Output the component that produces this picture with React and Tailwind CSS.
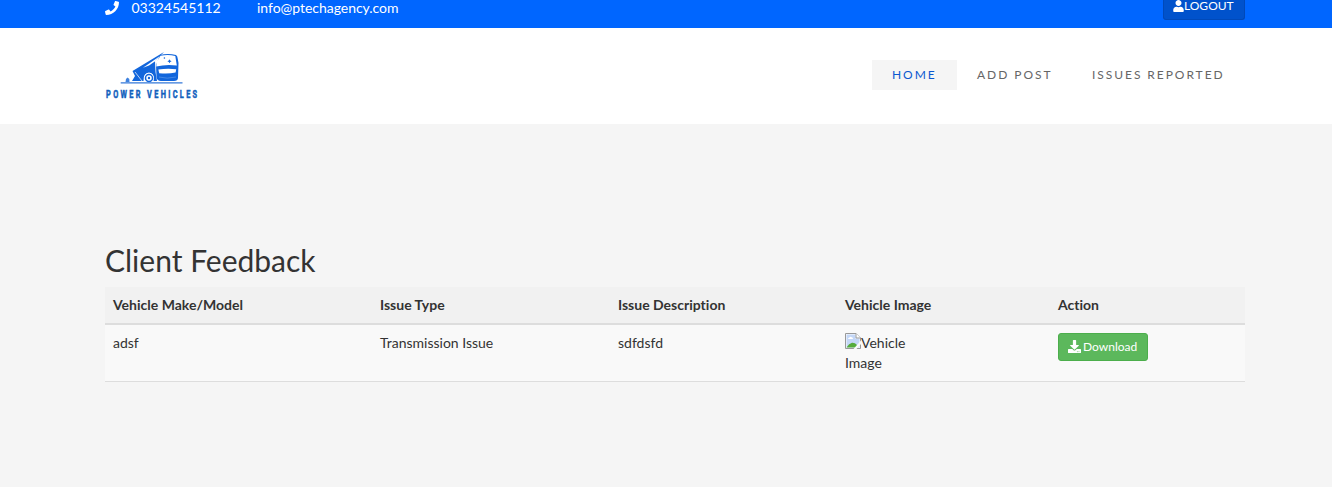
import React from "react";
import { FaPhone, FaUser, FaDownload } from "react-icons/fa";

function Logo() {
  return (
    <svg width="94" height="50" viewBox="0 0 94 50" role="img" aria-label="Power Vehicles">
      <path d="M27.5 21 L59 2 L50 11 L50.5 22 L52 31 H48.6 Q50 23 44 22.5 Q38 23 38.5 31 H27 L30 26Z" fill="#1266dc" />
      <path d="M38 17.8 L55 6 L50.5 11 L44 15.5Z" fill="#fff" />
      <path d="M30 22 L37 31" stroke="#fff" strokeWidth="0.7" fill="none" />
      <path d="M55 5 Q63 3 71 5 Q72.6 6 72.8 9 L73.5 13 L73 28 Q72.8 31 69 31 H56 Q52 31 51.5 27 L51 15Z" fill="#1266dc" />
      <path d="M55.5 5.8 Q63 4.3 70.3 6 L71.8 15.4 Q61 14 51.2 16.4 L51.8 11.5Z" fill="#fff" />
      <path d="M53.4 19.6 Q62 18 71.2 19.2 L70.6 22.6 Q63 24.2 54.2 23.2Z" fill="#fff" />
      <path d="M54 27 Q62 29.3 71 27" fill="none" stroke="#5a96e8" strokeWidth="0.7" />
      <path d="M64.5 9.2 l0.7 1.3 1.4 0.7 -1.4 0.7 -0.7 1.3 -0.7 -1.3 -1.4 -0.7 1.4 -0.7Z" fill="#1266dc" />
      <circle cx="59.4" cy="8" r="0.8" fill="#1266dc" />
      <circle cx="44" cy="28" r="4.8" fill="#fff" />
      <circle cx="44" cy="28" r="3.5" fill="none" stroke="#1266dc" strokeWidth="1.5" />
      <circle cx="44" cy="28" r="1.2" fill="#1266dc" />
      <path d="M20.5 32 L21 29 L22.5 27.5 L24.3 29 L24.5 32Z" fill="#3f82df" />
      <path d="M15.7 32.3 H77.5 V33.6 H15.7Z" fill="#3479d9" />
      <text
        x="1.6"
        y="47.6"
        fill="#1261bd"
        stroke="#1261bd"
        strokeWidth="0.5"
        textLength="130"
        lengthAdjust="spacing"
        className="font-['Roboto'] text-[10.5px] font-bold"
        transform="scale(0.7 1)"
      >
        POWER VEHICLES
      </text>
    </svg>
  );
}

function BrokenImage() {
  return (
    <svg className="inline-block h-4 w-4 align-top" viewBox="0 0 16 16" aria-hidden="true">
      <path d="M0.5 0.5 H11 L15.5 5 V15.5 H0.5Z" fill="#fff" stroke="#999" />
      <path d="M1.5 1.5 H10.5 V5.5 H14.5 V14.5 H1.5Z" fill="#c4d7f7" />
      <path d="M11 0.5 V5 H15.5" fill="#fff" stroke="#999" />
      <path d="M3 6 Q3 4.5 4.5 4.5 Q5.3 3 6.7 4.2 Q8 4.5 8 6Z" fill="#fff" />
      <path d="M1.5 14.5 Q4 10.5 7 9.7 Q10 9.5 12 12 L12 14.5Z" fill="#55ab3b" />
      <path d="M16 7.5 L8.5 16 H11.5 L16 11Z" fill="#f9f9f9" />
    </svg>
  );
}

const columns = ["Vehicle Make/Model", "Issue Type", "Issue Description", "Vehicle Image", "Action"];

export default function App() {
  return (
    <div className="h-[487px] overflow-hidden bg-[#f5f5f5] font-['Lato',sans-serif] text-sm leading-5 text-[#333] [font-variant-ligatures:no-common-ligatures]">
      <div className="h-7 bg-[#0066ff] pl-[105px] text-white">
        <div className="flex h-7 w-[1140px] items-start justify-between">
          <div className="flex h-4 items-center leading-4">
            <FaPhone className="h-3.5 w-3.5" />
            <span className="ml-[12.4px] w-[125.6px]">03324545112</span>
            <span className="tracking-[-0.03px]">info@ptechagency.com</span>
          </div>
          <button className="flex h-5 w-[82px] items-start rounded-b-[3px] border border-t-0 border-[#0049b9] bg-[#0052cc] pl-[9px] text-xs leading-3">
            <FaUser className="h-3 w-[11px]" />
            <span>LOGOUT</span>
          </button>
        </div>
      </div>

      <header className="h-24 bg-white pl-[105px]">
        <div className="flex w-[1140px] justify-between">
          <div className="pt-[22px]">
            <Logo />
          </div>
          <nav className="flex pt-8 text-xs leading-[30px] tracking-[1.95px] text-[#666]">
            <a className="h-[30px] w-[85px] bg-[#f5f5f5] pl-5 text-[#0b58d0]">HOME</a>
            <a className="h-[30px] w-[115px] pl-5 whitespace-nowrap">ADD POST</a>
            <a className="h-[30px] w-[173px] pl-5 whitespace-nowrap">ISSUES REPORTED</a>
          </nav>
        </div>
      </header>

      <main className="pt-[120px] pl-[105px]">
        <h2 className="mb-2.5 text-[30px] leading-[33px]">Client Feedback</h2>
        <table className="w-[1140px] table-fixed border-collapse text-left">
          <colgroup>
            <col className="w-[267px]" />
            <col className="w-[238px]" />
            <col className="w-[227px]" />
            <col className="w-[213px]" />
            <col className="w-[195px]" />
          </colgroup>
          <thead>
            <tr className="border-b-2 border-[#ddd] bg-[#f1f1f1]">
              {columns.map((name) => (
                <th key={name} className="p-2 font-bold">{name}</th>
              ))}
            </tr>
          </thead>
          <tbody>
            <tr className="border-b border-[#ddd] bg-[#f9f9f9] align-top">
              <td className="p-2">adsf</td>
              <td className="p-2">Transmission Issue</td>
              <td className="p-2">sdfdsfd</td>
              <td className="p-2">
                <BrokenImage />
                Vehicle
                <br />
                Image
              </td>
              <td className="p-2">
                <button className="flex h-7 w-[90px] items-center rounded-[3px] border border-[#4cae4c] bg-[#5cb85c] pl-[9px] text-xs text-white">
                  <FaDownload className="mr-0.5 h-[13px] w-[13px] -translate-y-px" />
                  Download
                </button>
              </td>
            </tr>
          </tbody>
        </table>
      </main>
    </div>
  );
}
